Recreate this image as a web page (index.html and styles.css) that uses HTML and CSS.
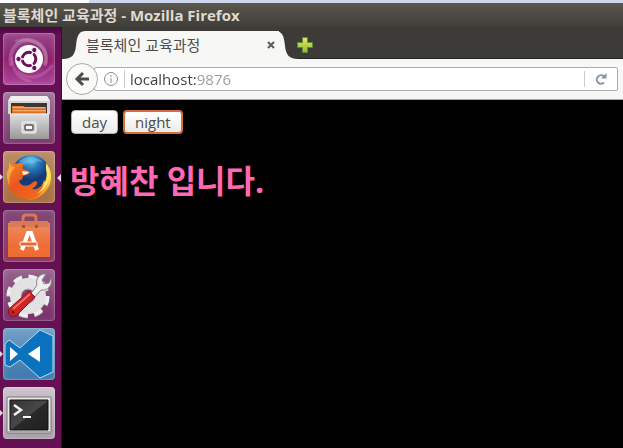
FILE: index.html
```html
<!DOCTYPE html>
<html lang="ko">
<head>
<meta charset="utf-8">
<title>블록체인 교육과정</title>
<link rel="stylesheet" href="styles.css">
</head>
<body>
<div class="backdrop"><div class="backdrop-light"></div></div>
<header class="titlebar">블록체인 교육과정 - Mozilla Firefox</header>
<div class="desktop">
  <nav class="launcher" aria-label="Launcher">
    <button class="tile tile-dash" aria-label="Dash">
      <svg viewBox="0 0 52 52">
        <g fill="none" stroke="#fff" stroke-linecap="round">
          <path d="M8 31C5 16 17 4 30 8c10 3 15 12 12 23" stroke-opacity=".2" stroke-width="4"/>
          <path d="M13 8c18-5 33 7 30 22M9 25c0 12 7 21 18 23M15 39c12 9 25 5 34-6" stroke-opacity=".14" stroke-width="3"/>
        </g>
        <circle cx="26" cy="26" r="14" fill="#fff"/>
        <circle cx="26" cy="26" r="6.800" fill="none" stroke="#6b1257" stroke-width="3"/>
        <path d="M26 26H15M26 26l6-10M26 26l6 10" stroke="#fff" stroke-width="1.500"/>
        <circle cx="26" cy="26" r="4.800" fill="#fff"/>
        <g fill="#6b1257" stroke="#fff"><circle cx="15.500" cy="26" r="2.700"/><circle cx="31.300" cy="17" r="2.700"/><circle cx="31.300" cy="35" r="2.700"/></g>
      </svg>
    </button>
    <button class="tile tile-files" aria-label="Files">
      <svg viewBox="0 0 52 52">
        <defs><linearGradient id="steel" x2="0" y2="1"><stop stop-color="#dedede"/><stop offset="1" stop-color="#999"/></linearGradient></defs>
        <path d="M8 4h36l3 5v13H5V9z" fill="#d5d5d3"/>
        <path d="M8 4h36l3 5H5z" fill="#f0f0ee"/>
        <path d="M8 11h36v12H8z" fill="#3d3635"/>
        <path d="M9 14h11l2 1h21v8H9z" fill="#e98437"/>
        <path d="M10 16h32M10 19h33" stroke="#ffd39d"/>
        <path d="M9 17h34M9 20h34" stroke="#c7571f"/>
        <path d="M7 22h39v25H7z" fill="url(#steel)"/>
        <path d="M7 22h39" stroke="#f4f4f4"/>
        <rect x="19" y="30" width="14" height="11" rx="1" fill="#d5d5d5" stroke="#f4f4f4"/>
        <rect x="22" y="33" width="8" height="5" rx="1" fill="#fafafa" stroke="#555" stroke-width="1.500"/>
      </svg>
    </button>
    <button class="tile tile-firefox running active" aria-label="Firefox">
      <svg viewBox="0 0 52 52">
        <defs>
          <radialGradient id="globe" cx=".5" cy=".15"><stop stop-color="#62c0e8"/><stop offset=".5" stop-color="#2371b5"/><stop offset="1" stop-color="#153a74"/></radialGradient>
          <linearGradient id="fox" x2=".8" y2="1"><stop stop-color="#f58c25"/><stop offset=".5" stop-color="#e9561f"/><stop offset="1" stop-color="#ee6b1c"/></linearGradient>
          <linearGradient id="tail" x2="0" y2="1"><stop stop-color="#fff28a"/><stop offset=".5" stop-color="#fed334"/><stop offset="1" stop-color="#f17a1b"/></linearGradient>
        </defs>
        <circle cx="28" cy="23" r="19" fill="url(#globe)"/>
        <path d="M16 10c7-5 17-5 24 1l-6-1-4 3-5-1-4 2z" fill="#7cc8ea" opacity=".5"/>
        <path d="M43 12c6 7 7 17 2 25-5 8-12 12-20 12l3-9c8 0 12-5 13-11l1 2c2-6 2-9 1-12z" fill="url(#tail)"/>
        <path d="M6 10c2 3 4 3 7 3 4-2 7-1 9-1-2 2-3 4-2 6 2 1 5 1 7 3 0 2-4 3-7 4 0 2-1 4-4 5 2 6 9 6 13 2 2-2 4-2 5-1 1 2-2 5-5 7 4 1 8-1 11-5 0 5-2 9-5 12-9 6-21 3-27-5-5-8-5-17-2-23z" fill="url(#fox)"/>
        <path d="M6 11c1 4 3 5 6 5-5 6-7 12-5 19-4-7-4-14-1-18z" fill="#f9a642"/>
        <path d="M19 20l7 1c-1 2-4 3-6 3z" fill="#fff0d0"/>
        <path d="M46 22c0 10-5 17-12 21 6-6 10-11 12-21z" fill="#fff6a0"/>
      </svg>
    </button>
    <button class="tile tile-software" aria-label="Software">
      <svg viewBox="0 0 52 52">
        <defs><linearGradient id="bag" x2="0" y2="1"><stop stop-color="#f08a5c"/><stop offset="1" stop-color="#eb5f29"/></linearGradient></defs>
        <path d="M5 13h42v34H5z" fill="url(#bag)"/>
        <path d="M7 11h38l2 6H5z" fill="#d77a59"/>
        <path d="M5 37h42v10H5z" fill="#f07536" opacity=".55"/>
        <path d="M20 17V8q0-3 3-3h7q3 0 3 3v9" fill="none" stroke="#dc7650" stroke-width="3"/>
        <path d="M19 15h3v3h-3zM32 15h3v3h-3z" fill="#b84b2a"/>
        <path d="M19 40l6-17h3l6 17" fill="none" stroke="#fff" stroke-width="4"/>
        <rect x="17" y="32" width="17" height="4" rx="1" fill="#eb6630" stroke="#fff"/>
      </svg>
    </button>
    <button class="tile tile-settings" aria-label="System Settings">
      <svg viewBox="0 0 52 52">
        <circle cx="25" cy="28" r="18" fill="none" stroke="#bdbdbd" stroke-width="7" stroke-dasharray="8 6.137"/>
        <circle cx="25" cy="27" r="18" fill="none" stroke="#eee" stroke-width="7" stroke-dasharray="8 6.137"/>
        <circle cx="25" cy="27" r="12.500" fill="none" stroke="#e2e2e2" stroke-width="11"/>
        <circle cx="25" cy="27" r="7" fill="#83416f" stroke="#bbb"/>
        <path d="M27 26l7-10c-2-6 3-12 9-11l-4 6 2 4 5-1 2-5c2 8-4 13-10 12l-8 9z" fill="#eee" stroke="#888"/>
        <path d="M7 39l19-17 6 6-18 18c-5 4-12-2-7-7z" fill="#cf2424" stroke="#831420"/>
        <path d="M10 40l17-15" stroke="#f07061" stroke-width="2"/>
        <circle cx="10" cy="43" r="1.500" fill="#721119"/>
      </svg>
    </button>
    <button class="tile tile-code running" aria-label="Visual Studio Code">
      <svg viewBox="0 0 52 52">
        <path d="M2 16l4-4 11 8L37 2l13 6v36l-13 6-20-18-10 7-5-2z" fill="#0b73bd" stroke="#b9dcf3"/>
        <path d="M7 19l8 7-8 7zM37 18v16L25 26z" fill="#fff"/>
      </svg>
    </button>
    <button class="tile tile-terminal running" aria-label="Terminal">
      <svg viewBox="0 0 52 52">
        <defs><linearGradient id="screen" x2="1" y2="1"><stop stop-color="#333"/><stop offset=".5" stop-color="#484848"/><stop offset=".52" stop-color="#292929"/><stop offset="1" stop-color="#202020"/></linearGradient></defs>
        <rect x="4" y="10" width="44" height="36" rx="1" fill="#e9e9e7" stroke="#77727a"/>
        <path d="M5 45h42" stroke="#aaa" stroke-width="2"/>
        <path d="M7 13h38v30H7z" fill="url(#screen)" stroke="#111"/>
        <path d="M11 18l7 5-7 5" fill="none" stroke="#f4f4f4" stroke-width="2.500"/><path d="M20 30h8" stroke="#fff" stroke-width="2"/>
      </svg>
    </button>
  </nav>
  <section class="browser">
    <div class="tabbar">
      <div class="tab">
        <svg class="tab-end" viewBox="0 0 24 28"><path d="M0 28C10 28 13 24 14 15C15 4 17 0 24 0V28Z"/></svg>
        <span class="tab-title">블록체인 교육과정</span>
        <button class="tab-close" aria-label="Close tab"><svg viewBox="0 0 8 8"><path d="M1 1l6 6M7 1l-6 6"/></svg></button>
        <svg class="tab-end" viewBox="4 0 20 28"><path d="M24 28C14 28 11 24 10 15C9 4 7 0 0 0V28Z"/></svg>
      </div>
      <button class="new-tab" aria-label="New tab"><svg viewBox="0 0 16 16"><defs><linearGradient id="plus" x2="0" y2="1"><stop stop-color="#e2eb73"/><stop offset="1" stop-color="#91b92b"/></linearGradient></defs><path d="M5.500 .5h5v5h5v5h-5v5h-5v-5h-5v-5h5z" fill="url(#plus)" stroke="#5e8b2e"/></svg></button>
    </div>
    <div class="toolbar">
      <button class="back" aria-label="Back"><svg viewBox="0 0 16 16"><path d="M9 2L3 8l6 6M3 8h12"/></svg></button>
      <form class="address">
        <svg class="info" viewBox="0 0 14 14"><circle cx="7" cy="7" r="6.500"/><path d="M7 3v2M7 6v5"/></svg>
        <input class="url" aria-label="Address" value="localhost:9876">
        <button class="reload" type="button" aria-label="Reload"><svg viewBox="0 0 12 12"><path d="M9 3.500A4.200 4.200 0 1 0 9 9.500" fill="none" stroke="#8795a3" stroke-width="2"/><path d="M11.500 0v5.500H6z" fill="#8795a3"/></svg></button>
      </form>
    </div>
    <main class="page">
      <div class="actions"><button class="choice">day</button><button class="choice focused">night</button></div>
      <h1>방혜찬 입니다.</h1>
    </main>
  </section>
</div>
</body>
</html>
```
FILE: styles.css
```css
* { box-sizing: border-box; }
body {
  margin: 0;
  min-height: 100vh;
  display: flex;
  flex-direction: column;
  font: 15px/20px "Open Sans", "Noto Sans CJK KR", sans-serif;
  background: #000;
}
button, input { font: inherit; border: 0; padding: 0; margin: 0; }
button { background: none; }
svg { display: block; }

.backdrop { height: 3px; background: #cdd7ed; }
.backdrop-light { width: 89px; height: 3px; background: #fafbff; }
.titlebar {
  height: 24px;
  padding-left: 3px;
  line-height: 24px;
  font-weight: 700;
  color: #dfdbd2;
  background: linear-gradient(#5b574e, #3f3e39);
  white-space: nowrap;
}
.desktop { flex: 1; display: flex; }

.launcher {
  width: 62px;
  flex: none;
  display: flex;
  flex-direction: column;
  gap: 7px;
  padding: 6px 3px 9px;
  background: linear-gradient(#48083c, #651052 8px);
  border-right: 1px solid #420833;
}
.tile {
  position: relative;
  width: 52px;
  height: 52px;
  border-radius: 4px;
  box-shadow: inset 0 0 0 1px #ffffff28, inset 0 0 6px #ffffff30;
}
.tile-dash { background: linear-gradient(#98488a, #8d206f 50%, #ad4599); }
.tile-files { background: linear-gradient(#a1749a, #79366b); }
.tile-firefox { background: linear-gradient(#bb8e67, #a66d3e); }
.tile-software { background: linear-gradient(#804879, #873559); }
.tile-settings { background: linear-gradient(#98648d, #772d67); }
.tile-code { background: linear-gradient(#729fc7, #3d77ad); }
.tile-terminal { background: linear-gradient(#cdc3cc, #a99daa); }
.running::before, .active::after {
  content: "";
  position: absolute;
  top: 23px;
  border: 3px solid transparent;
}
.running::before { left: -3px; border-left-color: #e2d8e0; border-right: 0; }
.active::after { right: -6px; border: 4px solid transparent; border-right-color: #e2d8e0; border-left: 0; }

.browser { flex: 1; min-width: 0; display: flex; flex-direction: column; }
.tabbar {
  height: 32px;
  display: flex;
  align-items: flex-end;
  background: #3c3b37;
  box-shadow: inset 0 -1px #252521;
}
.tab { display: flex; width: 237px; height: 28px; }
.tab-end { height: 28px; flex: none; fill: #f7f7f5; }
.tab-title {
  flex: 1;
  line-height: 28px;
  color: #4c4c4c;
  background: #f7f7f5;
  white-space: nowrap;
}
.tab-close { width: 12px; background: #f7f7f5; }
.tab-close svg { width: 8px; height: 8px; stroke: #5c5c5c; stroke-width: 2; }
.new-tab { width: 16px; height: 28px; margin-left: -2px; }
.new-tab svg { width: 16px; height: 16px; }

.toolbar {
  height: 41px;
  display: flex;
  align-items: center;
  padding: 0 5px 1px 4px;
  background: #f7f7f5;
  border-bottom: 1px solid #a8a8a2;
}
.back {
  position: relative;
  width: 32px;
  height: 32px;
  flex: none;
  display: grid;
  place-items: center;
  border: 1px solid #aaa9a4;
  border-radius: 50%;
  background: #fafaf9;
}
.back svg { width: 16px; height: 16px; fill: none; stroke: #4c4c4c; stroke-width: 3; }
.address {
  flex: 1;
  min-width: 0;
  height: 24px;
  display: flex;
  align-items: center;
  margin-left: -4px;
  padding-left: 9px;
  background: #fff;
  border: 1px solid #adada9;
  border-radius: 2px;
}
.info { width: 14px; height: 14px; flex: none; fill: none; stroke: #8c8c8c; }
.url {
  flex: 1;
  min-width: 0;
  height: 18px;
  margin-left: 6px;
  padding-left: 5px;
  line-height: 18px;
  border-left: 1px solid #ccc;
  color: transparent;
  caret-color: #333;
  background: linear-gradient(90deg, #3c3c3c 72px, #999 72px) text;
}
.reload {
  width: 33px;
  height: 16px;
  display: grid;
  place-items: center;
  border-left: 1px solid #ccc;
}
.reload svg { width: 12px; height: 12px; }

.page { flex: 1; padding: 10px 8px; background: #000; }
.actions { display: flex; gap: 5px; padding-left: 1px; }
.choice {
  height: 24px;
  padding: 0 10px;
  line-height: 20px;
  color: #4c4c4c;
  background: linear-gradient(#fff, #ececea);
  border: 1px solid #b5b1a9;
  border-radius: 4px;
}
.focused { border: 2px solid #d76c42; }
h1 {
  margin: 23px 0;
  font-size: 32px;
  line-height: 48px;
  font-weight: 700;
  color: #ff69b4;
}
```
